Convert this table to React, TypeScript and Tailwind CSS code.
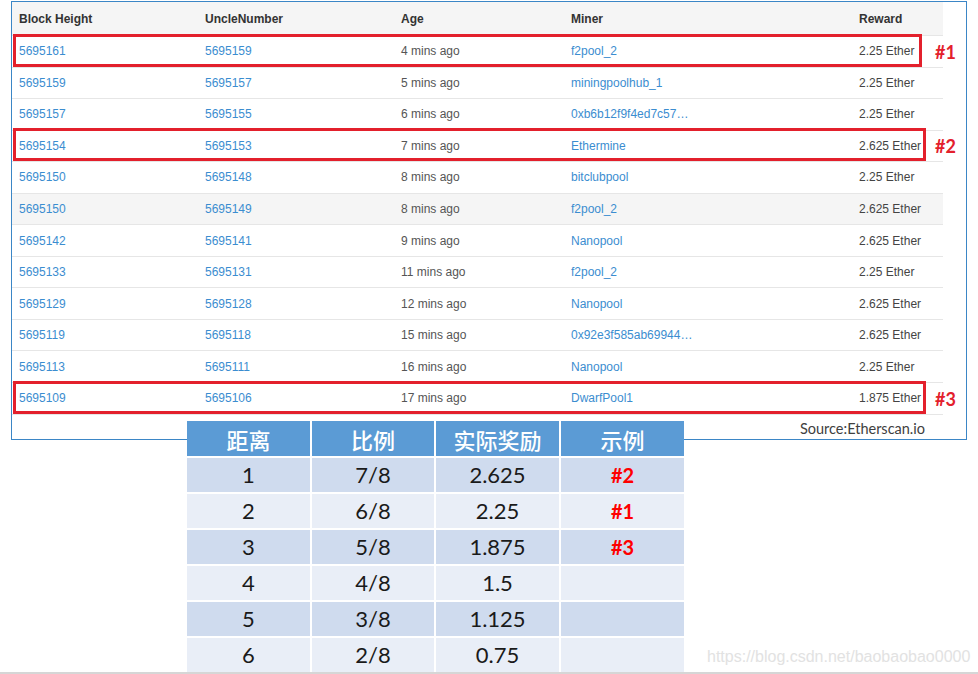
const blocks = [
  { height: '5695161', uncle: '5695159', age: '4 mins ago', miner: 'f2pool_2', reward: '2.25 Ether' },
  { height: '5695159', uncle: '5695157', age: '5 mins ago', miner: 'miningpoolhub_1', reward: '2.25 Ether' },
  { height: '5695157', uncle: '5695155', age: '6 mins ago', miner: '0xb6b12f9f4ed7c57…', reward: '2.25 Ether' },
  { height: '5695154', uncle: '5695153', age: '7 mins ago', miner: 'Ethermine', reward: '2.625 Ether' },
  { height: '5695150', uncle: '5695148', age: '8 mins ago', miner: 'bitclubpool', reward: '2.25 Ether' },
  { height: '5695150', uncle: '5695149', age: '8 mins ago', miner: 'f2pool_2', reward: '2.625 Ether', shaded: true },
  { height: '5695142', uncle: '5695141', age: '9 mins ago', miner: 'Nanopool', reward: '2.625 Ether' },
  { height: '5695133', uncle: '5695131', age: '11 mins ago', miner: 'f2pool_2', reward: '2.25 Ether' },
  { height: '5695129', uncle: '5695128', age: '12 mins ago', miner: 'Nanopool', reward: '2.625 Ether' },
  { height: '5695119', uncle: '5695118', age: '15 mins ago', miner: '0x92e3f585ab69944…', reward: '2.625 Ether' },
  { height: '5695113', uncle: '5695111', age: '16 mins ago', miner: 'Nanopool', reward: '2.25 Ether' },
  { height: '5695109', uncle: '5695106', age: '17 mins ago', miner: 'DwarfPool1', reward: '1.875 Ether' },
];

const ratios = [
  { distance: '1', ratio: '7/8', reward: '2.625', tag: '#2' },
  { distance: '2', ratio: '6/8', reward: '2.25', tag: '#1' },
  { distance: '3', ratio: '5/8', reward: '1.875', tag: '#3' },
  { distance: '4', ratio: '4/8', reward: '1.5', tag: '' },
  { distance: '5', ratio: '3/8', reward: '1.125', tag: '' },
  { distance: '6', ratio: '2/8', reward: '0.75', tag: '' },
];

const cols = 'grid grid-cols-[186px_196px_170px_288px_91px]';

function Highlight({ top, width, label }: { top: number; width: number; label: string }) {
  return (
    <>
      <div
        className="absolute left-[13px] h-[33px] border-[3px] border-[#e3202c]"
        style={{ top, width }}
      />
      <div
        className="absolute left-[935px] font-['Lato',sans-serif] text-[18px] font-bold leading-none text-[#e3202c]"
        style={{ top: top + 9 }}
      >
        {label}
      </div>
    </>
  );
}

function UnclesTable() {
  return (
    <div className="ml-[11px] mt-[1px] h-[439px] w-[956px] border border-[#3b86c6] font-['Liberation_Sans',Arial,sans-serif] text-[12px]">
      <div className="w-[931px]">
        <div className={`${cols} h-[34px] items-center border-b border-[#e6e6e6] bg-[#f5f5f5] font-bold text-[#333]`}>
          <div className="pl-[7px]">Block Height</div>
          <div className="pl-[7px]">UncleNumber</div>
          <div className="pl-[7px]">Age</div>
          <div className="pl-[7px]">Miner</div>
          <div className="pl-[7px]">Reward</div>
        </div>
        {blocks.map((b, i) => (
          <div
            key={i}
            className={`${cols} h-[31.55px] items-center border-b border-[#e6e6e6] ${b.shaded ? 'bg-[#f5f5f5]' : 'bg-white'}`}
          >
            <div className="pl-[7px] text-[#3b8dd0]">{b.height}</div>
            <div className="pl-[7px] text-[#3b8dd0]">{b.uncle}</div>
            <div className="pl-[7px] text-[#555]">{b.age}</div>
            <div className="pl-[7px] text-[#3b8dd0]">{b.miner}</div>
            <div className="pl-[7px] text-[#444]">{b.reward}</div>
          </div>
        ))}
      </div>
      <div className="flex h-[22px] items-end justify-end pr-[41px] font-['Lato',sans-serif] text-[14.5px] leading-[16px] text-[#404040]">
        Source:Etherscan.io
      </div>
    </div>
  );
}

function RatioTable() {
  return (
    <div className="relative z-10 -mt-[19px] ml-[187px] grid w-[497px] grid-cols-[123px_122px_123px_123px] gap-[2px] bg-white text-center">
      {['距离', '比例', '实际奖励', '示例'].map((h) => (
        <div
          key={h}
          className="flex h-[35px] items-center justify-center bg-[#5b9bd5] font-['Noto_Sans_CJK_SC',sans-serif] text-[22px] font-medium leading-none text-white"
        >
          {h}
        </div>
      ))}
      {ratios.map((r, i) => {
        const bg = i % 2 === 0 ? 'bg-[#cfdbee]' : 'bg-[#e9eef7]';
        return [r.distance, r.ratio, r.reward, r.tag].map((v, j) => (
          <div
            key={`${i}-${j}`}
            className={`flex h-[34px] items-center justify-center ${bg} font-['Lato',sans-serif] leading-none ${
              j === 3 ? 'text-[20px] font-bold text-[#ff0000]' : 'text-[22px] text-[#1a1a1a]'
            }`}
          >
            {v}
          </div>
        ));
      })}
    </div>
  );
}

export default function App() {
  return (
    <div className="relative h-[674px] w-[978px] overflow-hidden border-b-2 border-[#d6d6d6] bg-white">
      <UnclesTable />
      <RatioTable />

      <Highlight top={34} width={909} label="#1" />
      <Highlight top={128} width={913} label="#2" />
      <Highlight top={381} width={913} label="#3" />

      <div className="absolute left-[707px] top-[645px] font-['Liberation_Sans',Arial,sans-serif] text-[16px] text-[#e2e2e2]">
        https://blog.csdn.net/baobaobao0000
      </div>
    </div>
  );
}
